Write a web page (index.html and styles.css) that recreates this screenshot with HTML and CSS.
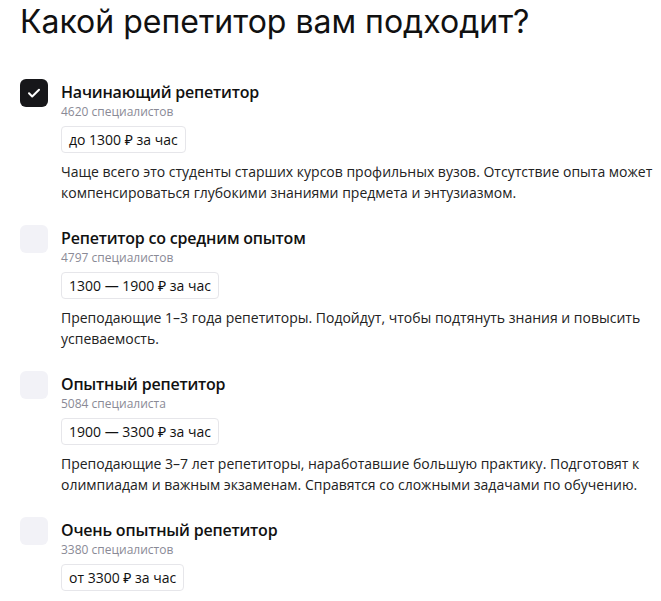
FILE: index.html
```html
<!DOCTYPE html>
<html lang="ru">
<head>
<meta charset="utf-8">
<link rel="stylesheet" href="styles.css">
</head>
<body>
<div class="page">
  <h1 class="title">Какой репетитор вам подходит?</h1>
  <div class="list">
    <div class="item">
      <div class="check checked">
        <svg width="16" height="16" viewBox="0 0 16 16"><path d="M3 8.3l3.2 3.2L13 4.7" fill="none" stroke="#fff" stroke-width="2" stroke-linecap="round" stroke-linejoin="round"/></svg>
      </div>
      <div class="content">
        <div class="name">Начинающий репетитор</div>
        <div class="count">4620 специалистов</div>
        <div class="chip">до 1300 ₽ за час</div>
        <p class="desc">Чаще всего это студенты старших курсов профильных вузов. Отсутствие опыта может компенсироваться глубокими знаниями предмета и энтузиазмом.</p>
      </div>
    </div>
    <div class="item">
      <div class="check"></div>
      <div class="content">
        <div class="name">Репетитор со средним опытом</div>
        <div class="count">4797 специалистов</div>
        <div class="chip">1300 — 1900 ₽ за час</div>
        <p class="desc">Преподающие 1–3 года репетиторы. Подойдут, чтобы подтянуть знания и повысить успеваемость.</p>
      </div>
    </div>
    <div class="item">
      <div class="check"></div>
      <div class="content">
        <div class="name">Опытный репетитор</div>
        <div class="count">5084 специалиста</div>
        <div class="chip">1900 — 3300 ₽ за час</div>
        <p class="desc">Преподающие 3–7 лет репетиторы, наработавшие большую практику. Подготовят к олимпиадам и важным экзаменам. Справятся со сложными задачами по обучению.</p>
      </div>
    </div>
    <div class="item">
      <div class="check"></div>
      <div class="content">
        <div class="name">Очень опытный репетитор</div>
        <div class="count">3380 специалистов</div>
        <div class="chip">от 3300 ₽ за час</div>
      </div>
    </div>
  </div>
</div>
</body>
</html>
```
FILE: styles.css
```css
html, body {
  margin: 0;
  padding: 0;
  background: #fff;
}
body {
  font-family: "Open Sans", "Noto Sans", sans-serif;
  color: #1a1a1a;
}
.page {
  padding: 4px 0 0 20px;
}
.title {
  margin: 0;
  font-family: Inter, Roboto, sans-serif;
  font-weight: 400;
  font-size: 32px;
  line-height: 36px;
  color: #111;
}
.list {
  margin-top: 39px;
  display: flex;
  flex-direction: column;
  gap: 22px;
}
.item {
  display: flex;
  gap: 13px;
  align-items: flex-start;
}
.check {
  flex: none;
  width: 28px;
  height: 28px;
  border-radius: 6px;
  background: #f2f2f7;
  display: flex;
  align-items: center;
  justify-content: center;
}
.check.checked {
  background: #17171a;
}
.content {
  flex: 1;
  min-width: 0;
}
.name {
  margin-top: 2px;
  font-size: 16px;
  font-weight: 600;
  letter-spacing: -0.2px;
  line-height: 22px;
  color: #111;
}
.count {
  font-size: 12px;
  line-height: 17px;
  color: #8a8a96;
}
.chip {
  display: inline-block;
  margin-top: 6px;
  padding: 0 7px;
  height: 27px;
  line-height: 25px;
  border: 1px solid #e6e6ea;
  border-radius: 4px;
  box-sizing: border-box;
  font-size: 14px;
  color: #111;
}
.desc {
  margin: 8px 0 0;
  font-size: 14px;
  line-height: 21px;
  color: #222;
}
```
